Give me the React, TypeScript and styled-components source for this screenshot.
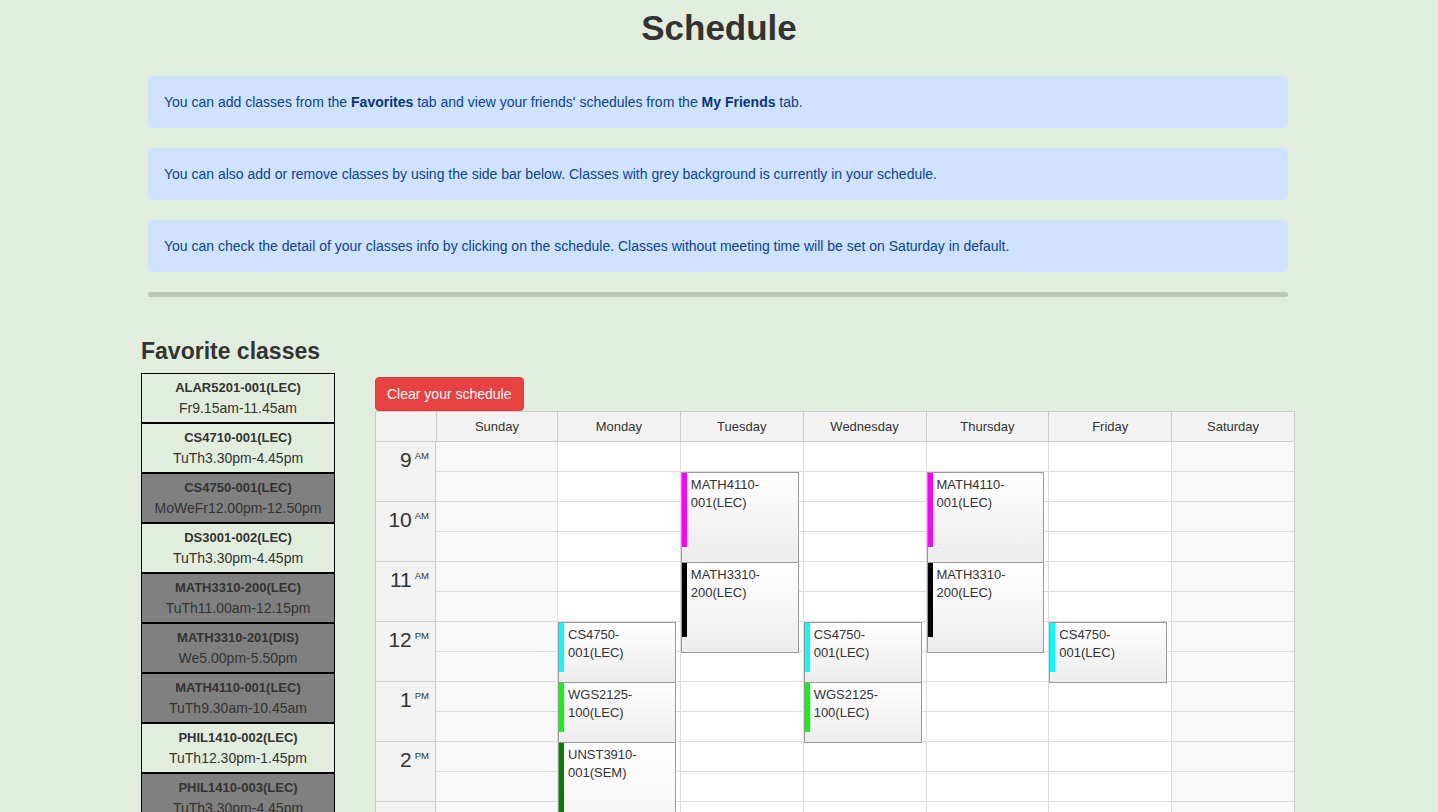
import React from "react";
import styled, { createGlobalStyle } from "styled-components";

const GlobalStyle = createGlobalStyle`
  html, body { margin: 0; padding: 0; }
  body {
    background: #e2eedd;
    font-family: "Liberation Sans", Arial, Helvetica, sans-serif;
    color: #333;
  }
  * { box-sizing: border-box; }
`;

const Page = styled.div`
  width: 100%;
  padding-bottom: 40px;
`;

const Title = styled.h1`
  margin: 7px 0 27px;
  text-align: center;
  font-size: 35px;
  line-height: 42px;
  font-weight: 700;
  color: #333;
`;

const Notes = styled.div`
  width: 1140px;
  margin: 0 auto;
  display: flex;
  flex-direction: column;
  gap: 20px;
  position: relative;
  left: -1px;
`;

const Alert = styled.div`
  background: #cfe2ff;
  color: #084298;
  border-radius: 5px;
  height: 52px;
  padding: 0 16px;
  display: flex;
  align-items: center;
  font-size: 14px;
`;

const AlertLink = styled.b`
  color: #06357a;
  font-weight: 700;
`;

const Divider = styled.div`
  height: 5px;
  border-radius: 3px;
  background: #bdc7b9;
`;

const Main = styled.div`
  width: 1156px;
  padding-right: 2px;
  margin: 40px auto 0;
  display: flex;
  gap: 40px;
  align-items: flex-start;
`;

const Sidebar = styled.div`
  width: 194px;
  flex: none;
`;

const SideHeading = styled.h2`
  margin: 0 0 7px;
  font-size: 23px;
  line-height: 29px;
  font-weight: 700;
  color: #333;
  white-space: nowrap;
`;

const ClassList = styled.div`
  display: flex;
  flex-direction: column;
`;

const ClassItem = styled.div<{ $active: boolean }>`
  height: 50px;
  border: 1.5px solid #000;
  background: ${(p) => (p.$active ? "#808080" : "transparent")};
  display: flex;
  flex-direction: column;
  align-items: center;
  justify-content: center;
  color: #333;
  text-align: center;
`;

const ClassName = styled.div`
  font-size: 13px;
  font-weight: 700;
  line-height: 20px;
`;

const ClassTime = styled.div`
  font-size: 14px;
  line-height: 20px;
`;

const CalendarArea = styled.div`
  width: 920px;
  flex: none;
  padding-top: 40px;
`;

const ClearButton = styled.button`
  display: block;
  background: #e84141;
  color: #fff;
  border: 1px solid #e33b3b;
  border-radius: 4px;
  font-family: inherit;
  font-size: 14px;
  line-height: 20px;
  padding: 6px 11px;
  margin: 0;
  cursor: pointer;
`;

const Calendar = styled.div`
  border: 1px solid #ccc;
  background: #fff;
`;

const columns = "60px 121px repeat(6, 1fr)";

const HeaderRow = styled.div`
  display: grid;
  grid-template-columns: ${columns};
  background: #f2f2f2;
  border-bottom: 1px solid #ccc;
`;

const HeaderCell = styled.div`
  height: 29px;
  display: flex;
  align-items: center;
  justify-content: center;
  font-size: 13px;
  color: #333;
  border-left: 1px solid #ccc;
  &:first-child { border-left: none; }
`;

const Body = styled.div`
  display: grid;
  grid-template-columns: ${columns};
`;

const TimeColumn = styled.div`
  background: #f2f2f2;
  border-right: 1px solid #ccc;
`;

const HourCell = styled.div`
  height: 60px;
  border-bottom: 1px solid #ccc;
  display: flex;
  justify-content: flex-end;
  align-items: flex-start;
  padding: 5px 6px 0 0;
  color: #333;
`;

const HourNum = styled.span`
  font-size: 21px;
  line-height: 26px;
`;

const HourSuffix = styled.span`
  font-size: 9.5px;
  line-height: 12px;
  margin-left: 3px;
  margin-top: 3px;
`;

const DayColumn = styled.div<{ $weekend: boolean }>`
  position: relative;
  background: ${(p) => (p.$weekend ? "#f8f8f8" : "#fff")};
  border-left: 1px solid #ddd;
  &:nth-child(2) { border-left: none; }
`;

const Slot = styled.div`
  height: 30px;
  border-bottom: 1px solid #ddd;
`;

const Event = styled.div`
  position: absolute;
  left: 0;
  right: 4px;
  border: 1px solid #999;
  background: linear-gradient(#ffffff, #ececec);
  padding: 3px 6px 0 9px;
  font-size: 13px;
  line-height: 18px;
  color: #333;
  overflow: hidden;
  z-index: 1;
`;

const EventBar = styled.div`
  position: absolute;
  left: -1px;
  top: -1px;
  width: 6px;
`;

type Cls = { name: string; time: string; active: boolean };

const classes: Cls[] = [
  { name: "ALAR5201-001(LEC)", time: "Fr9.15am-11.45am", active: false },
  { name: "CS4710-001(LEC)", time: "TuTh3.30pm-4.45pm", active: false },
  { name: "CS4750-001(LEC)", time: "MoWeFr12.00pm-12.50pm", active: true },
  { name: "DS3001-002(LEC)", time: "TuTh3.30pm-4.45pm", active: false },
  { name: "MATH3310-200(LEC)", time: "TuTh11.00am-12.15pm", active: true },
  { name: "MATH3310-201(DIS)", time: "We5.00pm-5.50pm", active: true },
  { name: "MATH4110-001(LEC)", time: "TuTh9.30am-10.45am", active: true },
  { name: "PHIL1410-002(LEC)", time: "TuTh12.30pm-1.45pm", active: false },
  { name: "PHIL1410-003(LEC)", time: "TuTh3.30pm-4.45pm", active: true },
  { name: "UNST3910-001(SEM)", time: "Mo2.00pm-4.30pm", active: true },
  { name: "WGS2125-100(LEC)", time: "MoWe1.00pm-1.50pm", active: true },
];

const days = ["Sunday", "Monday", "Tuesday", "Wednesday", "Thursday", "Friday", "Saturday"];
const hours = [9, 10, 11, 12, 1, 2, 3, 4, 5];

type Ev = { day: number; name: string; start: number; dur: number; block: number; color: string };

// start/dur/block in minutes from 9:00
const events: Ev[] = [
  { day: 2, name: "MATH4110-001(LEC)", start: 30, dur: 75, block: 90, color: "#ff00ff" },
  { day: 4, name: "MATH4110-001(LEC)", start: 30, dur: 75, block: 90, color: "#ff00ff" },
  { day: 2, name: "MATH3310-200(LEC)", start: 120, dur: 75, block: 90, color: "#000000" },
  { day: 4, name: "MATH3310-200(LEC)", start: 120, dur: 75, block: 90, color: "#000000" },
  { day: 1, name: "CS4750-001(LEC)", start: 180, dur: 50, block: 60, color: "#00ffff" },
  { day: 3, name: "CS4750-001(LEC)", start: 180, dur: 50, block: 60, color: "#00ffff" },
  { day: 5, name: "CS4750-001(LEC)", start: 180, dur: 50, block: 60, color: "#00ffff" },
  { day: 1, name: "WGS2125-100(LEC)", start: 240, dur: 50, block: 60, color: "#00ff00" },
  { day: 3, name: "WGS2125-100(LEC)", start: 240, dur: 50, block: 60, color: "#00ff00" },
  { day: 1, name: "UNST3910-001(SEM)", start: 300, dur: 150, block: 150, color: "#008000" },
  { day: 2, name: "PHIL1410-003(LEC)", start: 390, dur: 75, block: 90, color: "#ff8c00" },
  { day: 4, name: "PHIL1410-003(LEC)", start: 390, dur: 75, block: 90, color: "#ff8c00" },
  { day: 3, name: "MATH3310-201(DIS)", start: 480, dur: 50, block: 60, color: "#0000ff" },
];

function EventBlock({ ev }: { ev: Ev }) {
  const cut = ev.name.indexOf("-") + 1;
  return (
    <Event style={{ top: ev.start, height: ev.block + 1 }}>
      <EventBar style={{ height: ev.dur, background: ev.color }} />
      {ev.name.slice(0, cut)}
      <br />
      {ev.name.slice(cut)}
    </Event>
  );
}

export default function App() {
  return (
    <>
      <GlobalStyle />
      <Page>
        <Title>Schedule</Title>
        <Notes>
          <Alert>
            <span>
              You can add classes from the <AlertLink>Favorites</AlertLink> tab and view your friends' schedules from
              the <AlertLink>My Friends</AlertLink> tab.
            </span>
          </Alert>
          <Alert>
            You can also add or remove classes by using the side bar below. Classes with grey background is currently in
            your schedule.
          </Alert>
          <Alert>
            You can check the detail of your classes info by clicking on the schedule. Classes without meeting time will
            be set on Saturday in default.
          </Alert>
          <Divider />
        </Notes>
        <Main>
          <Sidebar>
            <SideHeading>Favorite classes</SideHeading>
            <ClassList>
              {classes.map((c) => (
                <ClassItem key={c.name} $active={c.active}>
                  <ClassName>{c.name}</ClassName>
                  <ClassTime>{c.time}</ClassTime>
                </ClassItem>
              ))}
            </ClassList>
          </Sidebar>
          <CalendarArea>
            <ClearButton>Clear your schedule</ClearButton>
            <Calendar>
              <HeaderRow>
                <HeaderCell />
                {days.map((d) => (
                  <HeaderCell key={d}>{d}</HeaderCell>
                ))}
              </HeaderRow>
              <Body>
                <TimeColumn>
                  {hours.map((h, i) => (
                    <HourCell key={i}>
                      <HourNum>{h}</HourNum>
                      <HourSuffix>{i < 3 ? "AM" : "PM"}</HourSuffix>
                    </HourCell>
                  ))}
                </TimeColumn>
                {days.map((d, di) => (
                  <DayColumn key={d} $weekend={di === 0 || di === 6}>
                    {hours.flatMap((_, i) => [<Slot key={`${i}a`} />, <Slot key={`${i}b`} />])}
                    {events
                      .filter((e) => e.day === di)
                      .map((e, k) => (
                        <EventBlock key={k} ev={e} />
                      ))}
                  </DayColumn>
                ))}
              </Body>
            </Calendar>
          </CalendarArea>
        </Main>
      </Page>
    </>
  );
}
